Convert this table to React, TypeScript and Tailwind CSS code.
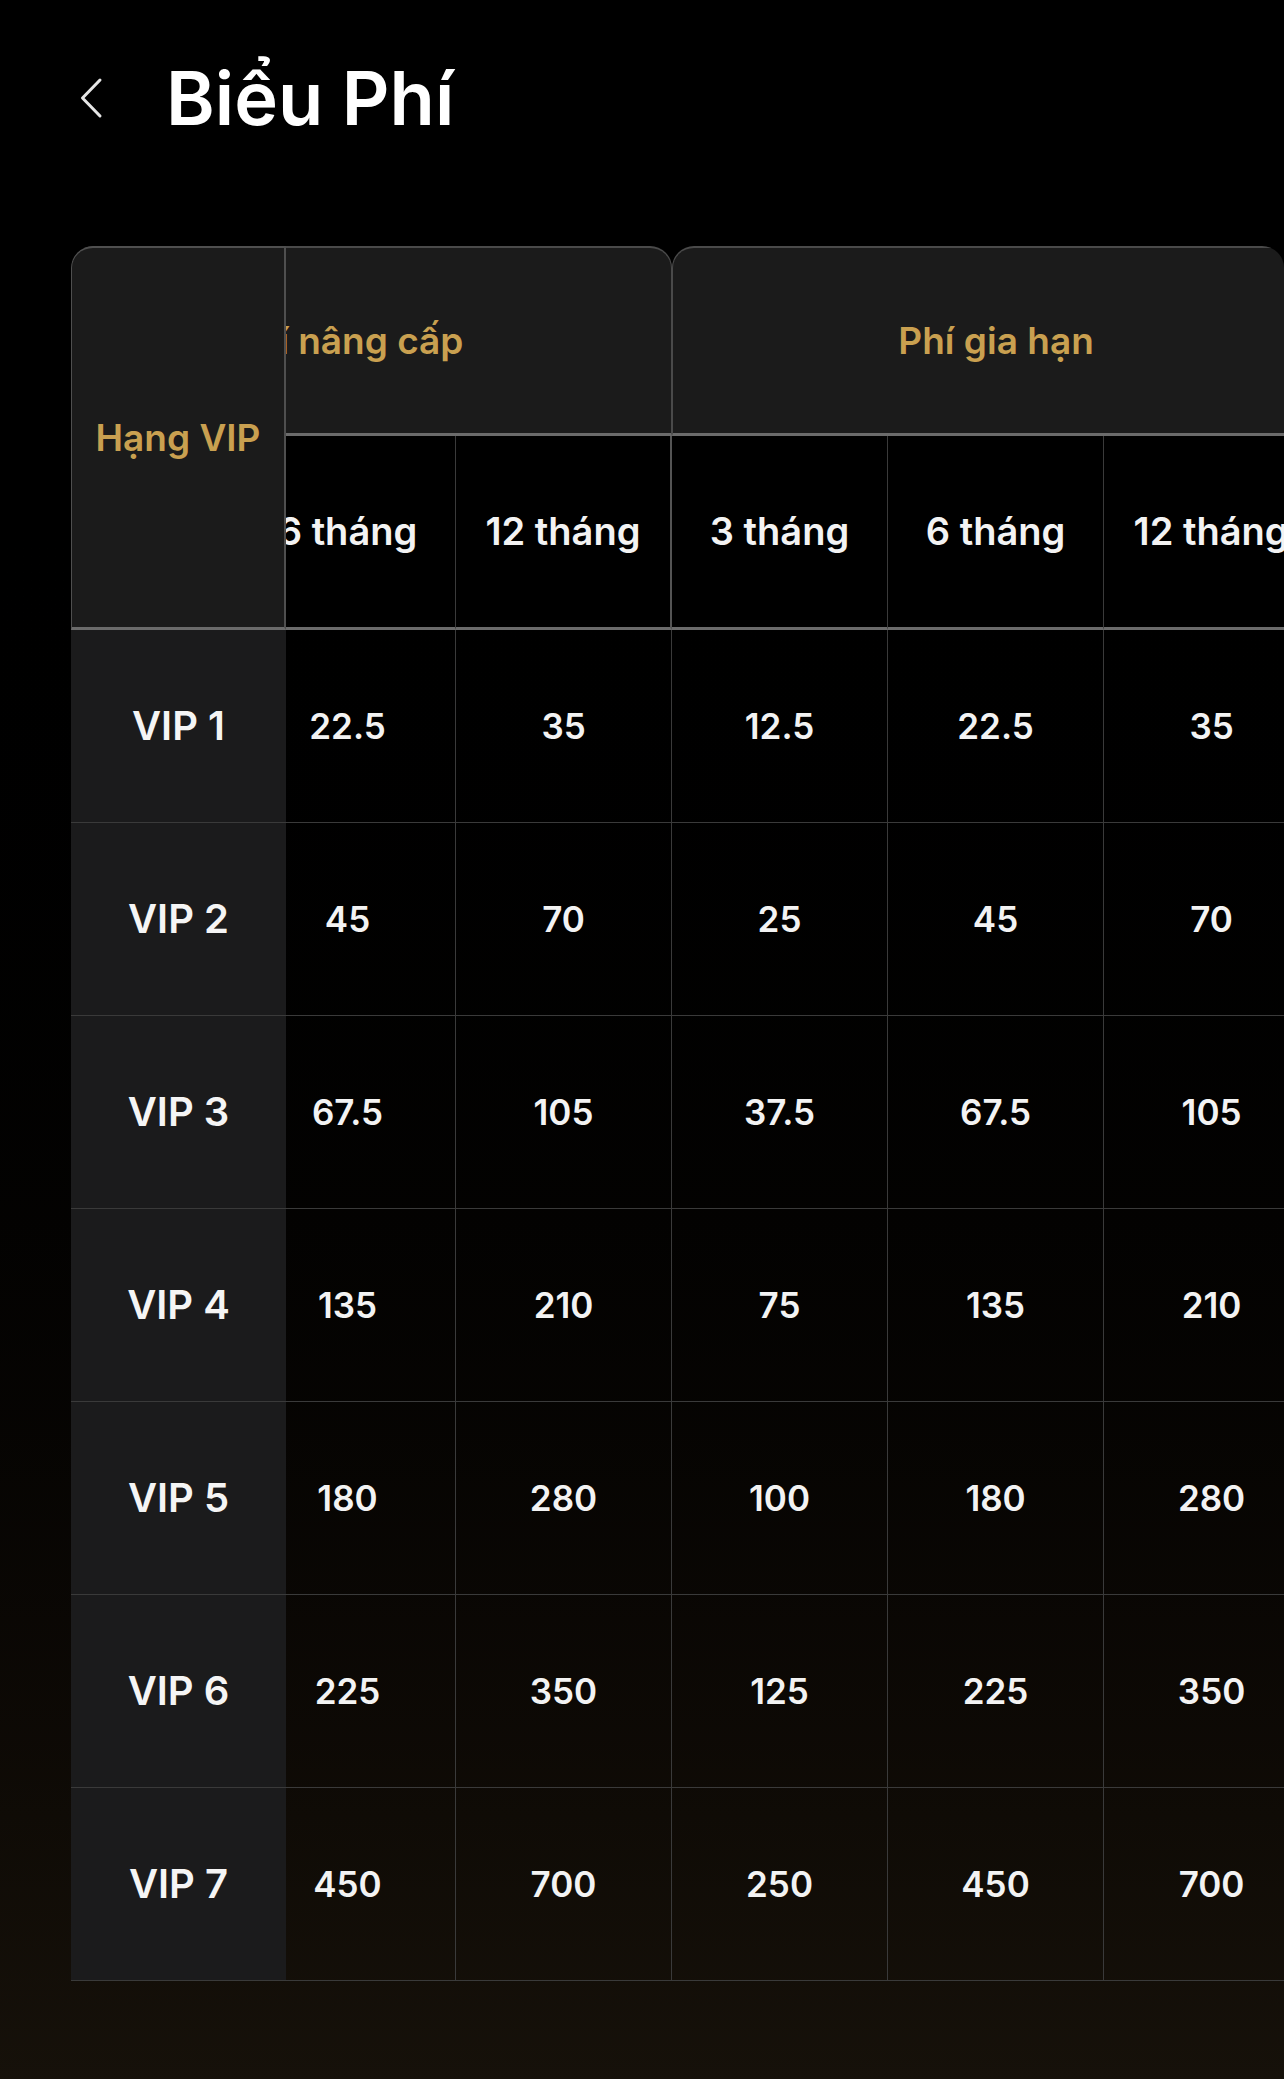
import React, { useLayoutEffect, useRef } from "react";

const SUB_COLS = ["3 tháng", "6 tháng", "12 tháng", "3 tháng", "6 tháng", "12 tháng"];

const ROWS = [
  { name: "VIP 1", fees: ["12.5", "22.5", "35", "12.5", "22.5", "35"] },
  { name: "VIP 2", fees: ["25", "45", "70", "25", "45", "70"] },
  { name: "VIP 3", fees: ["37.5", "67.5", "105", "37.5", "67.5", "105"] },
  { name: "VIP 4", fees: ["75", "135", "210", "75", "135", "210"] },
  { name: "VIP 5", fees: ["100", "180", "280", "100", "180", "280"] },
  { name: "VIP 6", fees: ["125", "225", "350", "125", "225", "350"] },
  { name: "VIP 7", fees: ["250", "450", "700", "250", "450", "700"] },
];

const ChevronLeft = () => (
  <svg width="24" height="42" viewBox="0 0 24 42" fill="none" className="shrink-0">
    <polyline
      points="21,3 3.5,21 21,39"
      stroke="#e6e6e6"
      strokeWidth="3"
      strokeLinecap="round"
      strokeLinejoin="round"
    />
  </svg>
);

export default function App() {
  const scrollRef = useRef<HTMLDivElement>(null);

  // bảng đang được cuộn ngang một đoạn
  useLayoutEffect(() => {
    if (scrollRef.current) scrollRef.current.scrollLeft = 262;
  }, []);

  const groupTh =
    "h-[190px] bg-[#1b1b1b] rounded-t-[22px] border-t-2 border-x border-[#4a4a4a] border-b-[3px] border-b-[#6b6b6b] text-[#c9a050] text-[37px] font-semibold";

  return (
    <div className="min-h-[2079px] w-full bg-linear-to-b from-black from-20% to-[#16110a] font-['Inter','Noto_Sans',sans-serif] text-[#f3f3f3]">
      {/* Header */}
      <header className="flex items-center gap-[63px] pl-[79px] pt-[61px]">
        <ChevronLeft />
        <h1 className="text-[74px] leading-[74px] font-semibold text-white">
          Biểu Phí
        </h1>
      </header>

      {/* Bảng phí */}
      <div
        ref={scrollRef}
        className="mt-[111px] ml-[71px] overflow-hidden rounded-tl-[22px] rounded-tr-[22px]"
      >
        <table className="table-fixed border-separate border-spacing-0 w-[1511px]">
          <colgroup>
            <col className="w-[215px]" />
            {SUB_COLS.map((_, i) => (
              <col key={i} className="w-[216px]" />
            ))}
          </colgroup>
          <thead>
            <tr>
              <th
                rowSpan={2}
                className="sticky left-0 z-20 bg-[#1b1b1b] rounded-tl-[22px] border-t-2 border-l border-r-2 border-[#4f4f4f] border-b-[3px] border-b-[#6b6b6b] text-[#c9a050] text-[37px] font-semibold"
              >
                Hạng VIP
              </th>
              <th colSpan={3} className={groupTh}>
                Phí nâng cấp
              </th>
              <th colSpan={3} className={groupTh}>
                Phí gia hạn
              </th>
            </tr>
            <tr>
              {SUB_COLS.map((c, i) => (
                <th
                  key={i}
                  className={`h-[194px] bg-black border-b-[3px] border-b-[#6b6b6b] text-[38px] font-semibold text-[#f3f3f3] ${
                    i % 3 === 2 ? "border-r-2 border-r-[#545454]" : "border-r border-r-[#3a3a3a]"
                  }`}
                >
                  {c}
                </th>
              ))}
            </tr>
          </thead>
          <tbody>
            {ROWS.map((r) => (
              <tr key={r.name} className="h-[193px]">
                <td className="sticky left-0 z-10 bg-[#1b1b1c] border-b border-b-[#3a3a3a] text-center text-[40px] font-semibold text-[#f5f5f5]">
                  {r.name}
                </td>
                {r.fees.map((f, i) => (
                  <td
                    key={i}
                    className="border-b border-r border-[#3a3a3a] text-center text-[35px] font-semibold text-[#f3f3f3]"
                  >
                    {f}
                  </td>
                ))}
              </tr>
            ))}
          </tbody>
        </table>
      </div>
    </div>
  );
}
